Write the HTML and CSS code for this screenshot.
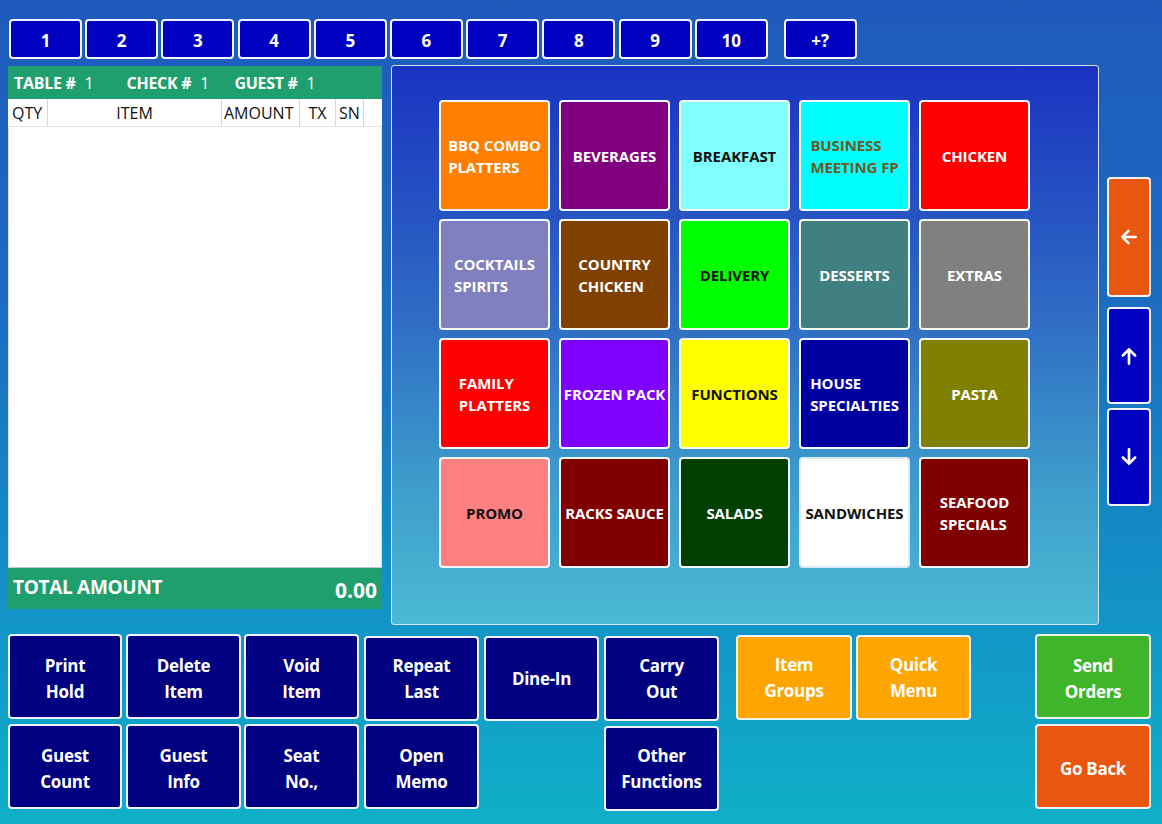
FILE: index.html
```html
<!DOCTYPE html>
<html>
<head>
<meta charset="utf-8">
<link rel="stylesheet" href="styles.css">
</head>
<body>
<div class="app">
  <div class="topbar">
    <div class="tab">1</div>
    <div class="tab">2</div>
    <div class="tab">3</div>
    <div class="tab">4</div>
    <div class="tab">5</div>
    <div class="tab">6</div>
    <div class="tab">7</div>
    <div class="tab">8</div>
    <div class="tab">9</div>
    <div class="tab">10</div>
    <div class="tab tab-more">+?</div>
  </div>

  <div class="main">
    <div class="check">
      <div class="check-head">
        <span class="lbl">TABLE #</span><span class="val">1</span>
        <span class="lbl l2">CHECK #</span><span class="val">1</span>
        <span class="lbl l3">GUEST #</span><span class="val">1</span>
      </div>
      <div class="cols">
        <div class="c c-qty">QTY</div>
        <div class="c c-item">ITEM</div>
        <div class="c c-amt">AMOUNT</div>
        <div class="c c-tx">TX</div>
        <div class="c c-sn">SN</div>
        <div class="c c-rest"></div>
      </div>
      <div class="lines"></div>
      <div class="total">
        <span class="total-lbl">TOTAL AMOUNT</span>
        <span class="total-val">0.00</span>
      </div>
    </div>

    <div class="menu">
      <div class="grid">
        <div class="g" style="background:#ff8000"><span>BBQ COMBO<br>PLATTERS</span></div>
        <div class="g" style="background:#800080"><span>BEVERAGES</span></div>
        <div class="g dark" style="background:#80ffff"><span>BREAKFAST</span></div>
        <div class="g olive" style="background:#00ffff"><span>BUSINESS<br>MEETING FP</span></div>
        <div class="g" style="background:#ff0000"><span>CHICKEN</span></div>

        <div class="g" style="background:#8080c0"><span>COCKTAILS<br>SPIRITS</span></div>
        <div class="g" style="background:#804000"><span>COUNTRY<br>CHICKEN</span></div>
        <div class="g dark" style="background:#00ff00"><span>DELIVERY</span></div>
        <div class="g" style="background:#408080"><span>DESSERTS</span></div>
        <div class="g" style="background:#808080"><span>EXTRAS</span></div>

        <div class="g" style="background:#ff0000"><span>FAMILY<br>PLATTERS</span></div>
        <div class="g" style="background:#8000ff"><span>FROZEN PACK</span></div>
        <div class="g dark" style="background:#ffff00"><span>FUNCTIONS</span></div>
        <div class="g" style="background:#0000a0"><span>HOUSE<br>SPECIALTIES</span></div>
        <div class="g" style="background:#808000"><span>PASTA</span></div>

        <div class="g dark" style="background:#ff8080"><span>PROMO</span></div>
        <div class="g" style="background:#800000"><span>RACKS SAUCE</span></div>
        <div class="g" style="background:#004000"><span>SALADS</span></div>
        <div class="g dark white-btn" style="background:#ffffff"><span>SANDWICHES</span></div>
        <div class="g" style="background:#800000"><span>SEAFOOD<br>SPECIALS</span></div>
      </div>
    </div>

    <div class="nav">
      <div class="arrow back">
        <svg width="20" height="20" viewBox="0 0 18 18"><path d="M15 9H3M8.5 3.5L3 9l5.5 5.5" fill="none" stroke="#fff" stroke-width="2.4" stroke-linecap="round" stroke-linejoin="round"/></svg>
      </div>
      <div class="arrow up">
        <svg width="20" height="20" viewBox="0 0 18 18"><path d="M9 16V3M3.5 8.5L9 3l5.5 5.5" fill="none" stroke="#fff" stroke-width="2.4" stroke-linecap="round" stroke-linejoin="round"/></svg>
      </div>
      <div class="arrow down">
        <svg width="20" height="20" viewBox="0 0 18 18"><path d="M9 2v13M3.5 9.5L9 15l5.5-5.5" fill="none" stroke="#fff" stroke-width="2.4" stroke-linecap="round" stroke-linejoin="round"/></svg>
      </div>
    </div>
  </div>

  <div class="bottom">
    <div class="b navy c1 r1">Print<br>Hold</div>
    <div class="b navy c2 r1">Delete<br>Item</div>
    <div class="b navy c3 r1">Void<br>Item</div>
    <div class="b navy c4 r1 lowered">Repeat<br>Last</div>
    <div class="b navy c5 r1 lowered">Dine-In</div>
    <div class="b navy c6 r1 lowered">Carry<br>Out</div>
    <div class="b amber c7 r1 lowered1">Item<br>Groups</div>
    <div class="b amber c8 r1 lowered1">Quick<br>Menu</div>
    <div class="b green c9 r1">Send<br>Orders</div>

    <div class="b navy c1 r2">Guest<br>Count</div>
    <div class="b navy c2 r2">Guest<br>Info</div>
    <div class="b navy c3 r2">Seat<br>No.,</div>
    <div class="b navy c4 r2">Open<br>Memo</div>
    <div class="b navy c6 r2 lowered">Other<br>Functions</div>
    <div class="b red c9 r2">Go Back</div>
  </div>
</div>
</body>
</html>
```

FILE: styles.css
```css
* { box-sizing: border-box; }
html, body { margin: 0; padding: 0; }
body {
  font-family: "Open Sans", "Noto Sans", sans-serif;
  width: 1162px;
  height: 824px;
  overflow: hidden;
}
.app {
  width: 1162px;
  height: 824px;
  background: linear-gradient(180deg, #1f5abd 0%, #1c6bc0 35%, #138fc6 70%, #0fb0c8 100%);
  display: flex;
  flex-direction: column;
}

/* top bar */
.topbar {
  display: flex;
  gap: 3.2px;
  padding: 19px 0 0 9px;
}
.tab {
  width: 73px;
  height: 40px;
  background: #0000c0;
  border: 2px solid #f2f4ff;
  border-radius: 4px;
  color: #fff;
  font-weight: 700;
  font-size: 17px;
  display: flex;
  align-items: center;
  justify-content: center;
  padding-top: 2px;
}
.tab-more { margin-left: 12.8px; }

/* main */
.main {
  display: flex;
  margin-top: 6px;
  height: 560px;
}
.check {
  margin-left: 8px;
  margin-top: 1px;
  width: 374px;
  height: 543px;
  display: flex;
  flex-direction: column;
  background: #fff;
}
.check-head {
  height: 33px;
  background: #1f9e6e;
  color: #fff;
  display: flex;
  align-items: center;
  padding-left: 6px;
  font-size: 16px;
}
.lbl { font-weight: 700; letter-spacing: -0.3px; }
.val { margin-left: 9px; font-weight: 400; }
.l2 { margin-left: 33px; }
.l3 { margin-left: 25px; }
.cols {
  display: flex;
  height: 28px;
  border-bottom: 1px solid #e4e4e4;
  font-size: 16px;
  color: #111;
}
.c {
  display: flex;
  align-items: center;
  border-right: 1px solid #d6d6d6;
}
.c-qty { width: 40px; padding-left: 4px; }
.c-item { width: 174px; justify-content: center; }
.c-amt { width: 78px; padding-left: 2px; }
.c-tx { width: 36px; justify-content: center; }
.c-sn { width: 28px; padding-left: 3px; }
.c-rest { flex: 1; border-right: none; }
.lines {
  flex: 1;
  background: #fff;
  border-left: 1px solid #dde;
  border-right: 1px solid #dde;
  border-bottom: 1px solid #b8c8d8;
}
.total {
  height: 41px;
  background: #1f9e6e;
  color: #fff;
  display: flex;
  align-items: center;
  justify-content: space-between;
  padding: 0 5px 0 5px;
  font-weight: 700;
}
.total-lbl { font-size: 19px; letter-spacing: -0.3px; margin-top: -4px; }
.total-val { font-size: 21px; margin-top: 2px; }

/* menu panel */
.menu {
  margin-left: 9px;
  width: 708px;
  height: 560px;
  border: 1px solid #d8e6f4;
  border-radius: 3px;
  background: linear-gradient(180deg, #1a33c2 0%, #2f6cc4 45%, #3d9ccb 75%, #4bbad3 100%);
  padding: 34px 0 0 47px;
}
.grid {
  display: grid;
  grid-template-columns: repeat(5, 111px);
  grid-auto-rows: 111px;
  column-gap: 9px;
  row-gap: 8px;
}
.g {
  border: 2px solid #f4f8ff;
  border-radius: 4px;
  display: flex;
  align-items: center;
  justify-content: center;
  color: #fff;
  font-weight: 700;
  font-size: 15px;
  letter-spacing: -0.1px;
  line-height: 22px;
}
.g span { display: inline-block; text-align: left; white-space: nowrap; }
.g.dark { color: #111; }
.g.olive { color: #6a5a1e; }
.g.white-btn { border-color: #dbeaf6; }

/* right nav */
.nav {
  margin-left: 8px;
  width: 44px;
  padding-top: 112px;
  display: flex;
  flex-direction: column;
}
.arrow {
  border: 2px solid #f2f4ff;
  border-radius: 4px;
  display: flex;
  align-items: center;
  justify-content: center;
}
.arrow.back { height: 120px; background: #e8560f; }
.arrow.up { height: 97px; background: #0000c0; margin-top: 10px; }
.arrow.down { height: 98px; background: #0000c0; margin-top: 4px; }

/* bottom */
.bottom {
  margin-top: 9px;
  padding-left: 8px;
  display: grid;
  grid-template-columns: 114px 4px 115px 3px 115px 5px 115px 5px 115px 5px 115px 17px 116px 4px 115px 64px 116px;
  grid-template-rows: 85px 85px;
  row-gap: 5px;
}
.b {
  border: 2px solid #f0f4fa;
  border-radius: 4px;
  color: #fff;
  font-weight: 700;
  font-size: 17px;
  line-height: 26px;
  letter-spacing: -0.3px;
  display: flex;
  align-items: center;
  justify-content: center;
  text-align: center;
  padding-top: 4px;
}
.lowered, .lowered1 { padding-top: 1px; }
.r1 { grid-row: 1; }
.r2 { grid-row: 2; }
.c1 { grid-column: 1; }
.c2 { grid-column: 3; }
.c3 { grid-column: 5; }
.c4 { grid-column: 7; }
.c5 { grid-column: 9; }
.c6 { grid-column: 11; }
.c7 { grid-column: 13; }
.c8 { grid-column: 15; }
.c9 { grid-column: 17; }
.lowered { transform: translateY(2px); }
.lowered1 { transform: translateY(1px); }
.navy { background: #000080; }
.amber { background: #ffa500; }
.green { background: #3fb52a; }
.red { background: #e8560f; }
```
